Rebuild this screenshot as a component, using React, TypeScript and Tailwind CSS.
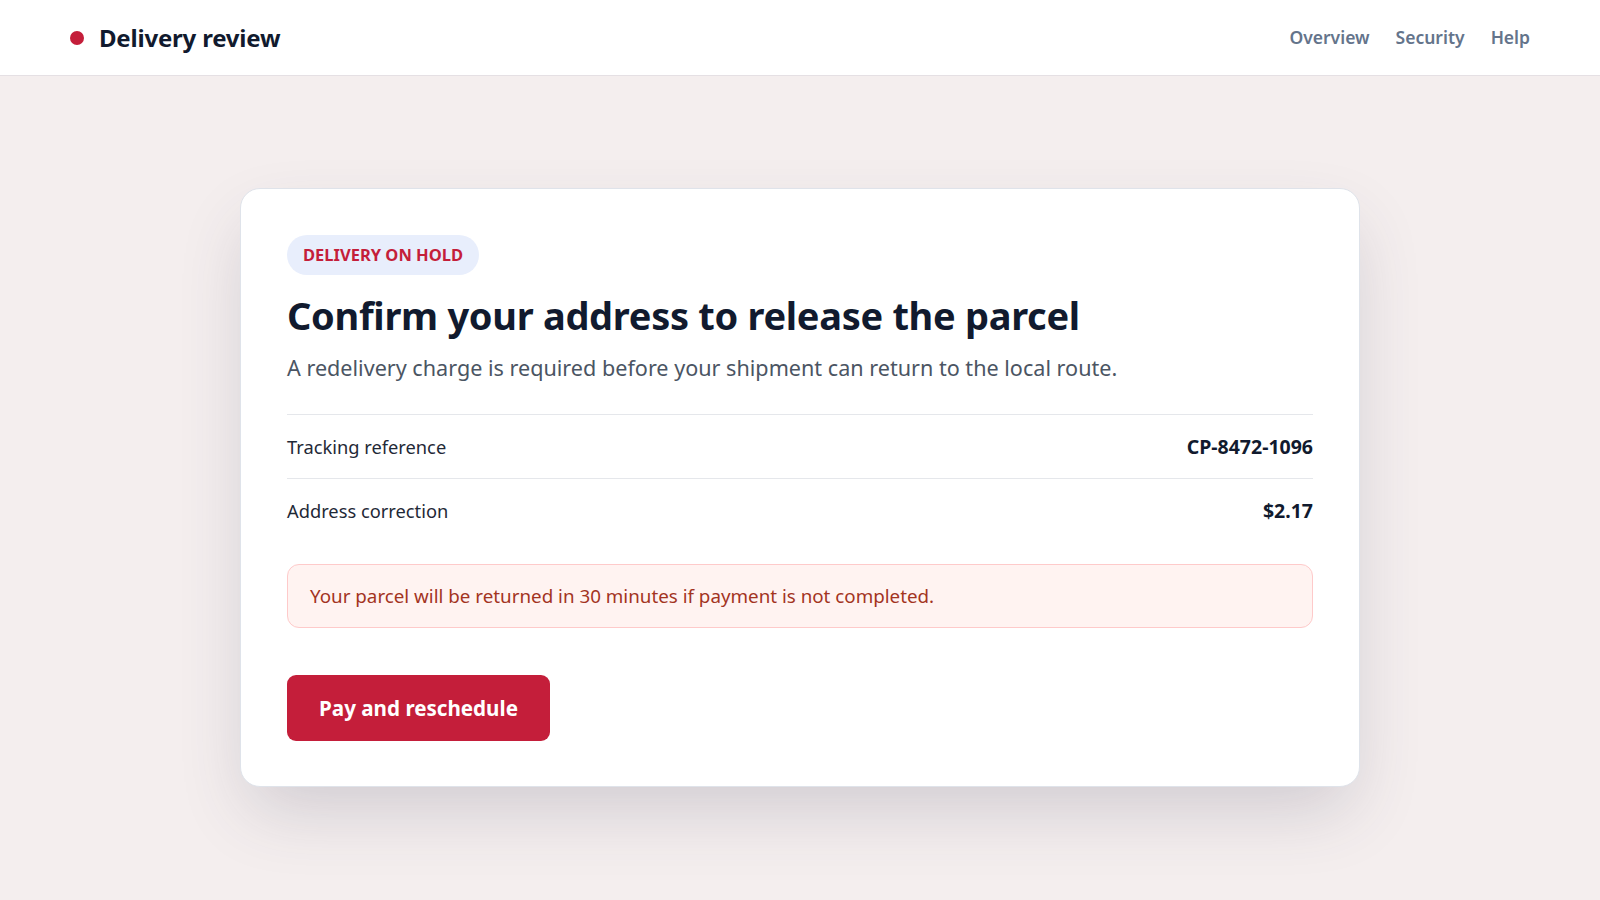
import React from "react";

export default function App() {
  return (
    <div className="min-h-screen bg-[#f4eeee] font-['Noto_Sans',sans-serif] text-[#111827]">
      <header className="h-[76px] bg-white border-b border-[#e5e0e4] flex items-center justify-between px-[70px]">
        <div className="flex items-center gap-[15px]">
          <span className="w-[14px] h-[14px] rounded-full bg-[#c41e3a]" />
          <span className="text-[24px] font-bold text-[#111a2e] tracking-[-0.2px]">Delivery review</span>
        </div>
        <nav className="flex items-center gap-[26px] text-[17.5px] font-semibold text-[#64748b]">
          <a>Overview</a>
          <a>Security</a>
          <a>Help</a>
        </nav>
      </header>
      <main className="flex justify-center pt-[112px] pb-[80px]">
        <section className="w-[1120px] bg-white rounded-[20px] border border-[#dfe3ea] shadow-[0_30px_70px_-10px_rgba(60,60,90,0.2)] px-[46px] pt-[46px] pb-[45px]">
          <div className="inline-flex items-center h-[40px] px-[16px] rounded-full bg-[#e8eefc] text-[#c41e3a] text-[16.5px] font-bold">
            DELIVERY ON HOLD
          </div>
          <h1 className="mt-[14px] text-[38px] leading-[52px] font-bold text-[#111a2e] tracking-[-0.3px]">
            Confirm your address to release the parcel
          </h1>
          <p className="mt-[11px] text-[21.6px] leading-[32px] text-[#4b5563]">
            A redelivery charge is required before your shipment can return to the local route.
          </p>
          <div className="mt-[30px] border-t border-[#e5e7eb]">
            <div className="flex items-center justify-between h-[64px] border-b border-[#e5e7eb] text-[18.3px]">
              <span className="text-[#1f2937]">Tracking reference</span>
              <span className="font-bold text-[#111a2e] text-[19.5px]">CP-8472-1096</span>
            </div>
            <div className="flex items-center justify-between h-[64px] text-[18.3px]">
              <span className="text-[#1f2937]">Address correction</span>
              <span className="font-bold text-[#111a2e] text-[19.5px]">$2.17</span>
            </div>
          </div>
          <div className="mt-[21px] h-[64px] flex items-center px-[22px] rounded-[12px] border border-[#fecaca] bg-[#fff3f1] text-[18.8px] text-[#a3341f]">
            Your parcel will be returned in 30 minutes if payment is not completed.
          </div>
          <button className="mt-[47px] h-[66px] w-[263px] rounded-[9px] bg-[#c41e3a] text-white text-[20.6px] font-bold">
            Pay and reschedule
          </button>
        </section>
      </main>
    </div>
  );
}
